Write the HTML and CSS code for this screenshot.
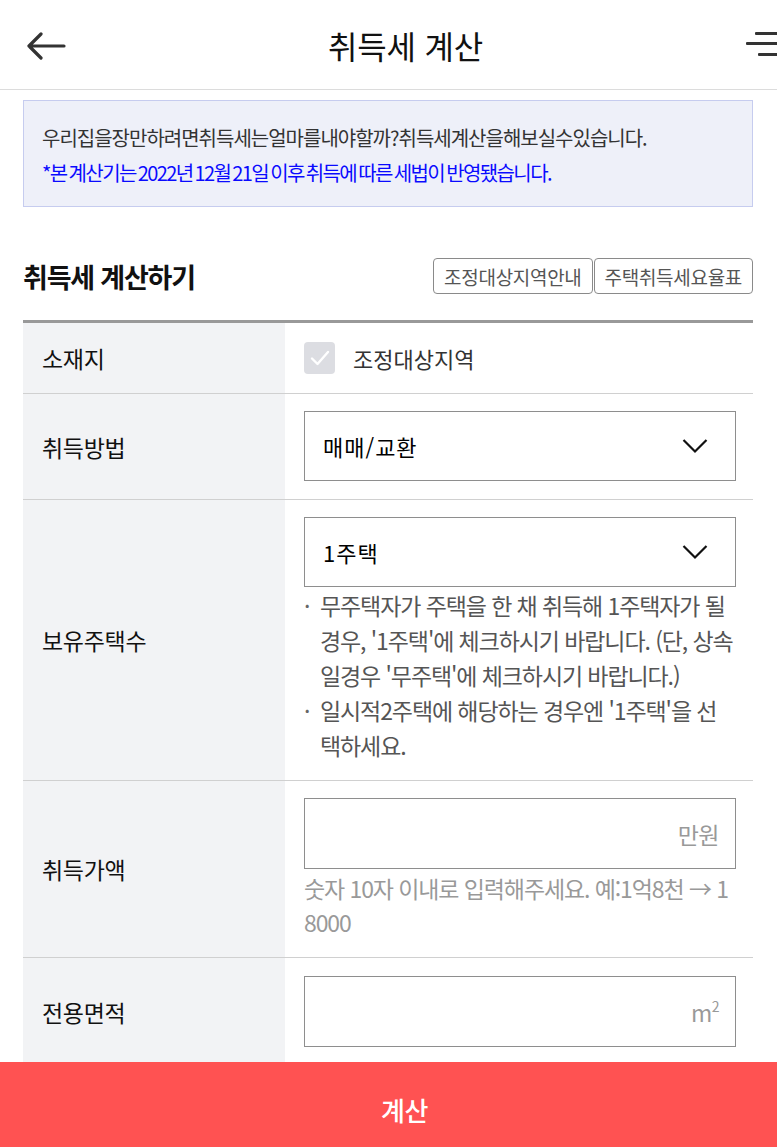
FILE: index.html
```html
<!DOCTYPE html>
<html lang="ko">
<head>
<meta charset="utf-8">
<title>취득세 계산</title>
<link rel="stylesheet" href="styles.css">
</head>
<body>
<header class="topbar">
  <button class="icon-btn back" aria-label="뒤로">
    <svg width="40" height="28" viewBox="0 0 40 28"><path d="M3 14H38M15 2L3 14L15 26" fill="none" stroke="#333" stroke-width="3.2" stroke-linecap="round" stroke-linejoin="round"/></svg>
  </button>
  <h1 class="title">취득세 계산</h1>
  <button class="icon-btn menu" aria-label="메뉴">
    <span class="bar bar1"></span>
    <span class="bar bar2"></span>
    <span class="bar bar3"></span>
  </button>
</header>

<main class="content">
  <div class="notice">
    <p class="notice-main">우리집을장만하려면취득세는얼마를내야할까?취득세계산을해보실수있습니다.</p>
    <p class="notice-blue">*본 계산기는 2022년 12월 21일 이후 취득에 따른 세법이 반영됐습니다.</p>
  </div>

  <div class="section-head">
    <h2 class="section-title">취득세 계산하기</h2>
    <div class="head-btns">
      <button class="outline-btn">조정대상지역안내</button>
      <button class="outline-btn">주택취득세요율표</button>
    </div>
  </div>

  <div class="form-table">
    <div class="row">
      <div class="label">소재지</div>
      <div class="value value-center">
        <label class="check">
          <span class="check-box">
            <svg width="20" height="16" viewBox="0 0 20 16"><path d="M2 8.5L7.5 14L18 2" fill="none" stroke="#fff" stroke-width="2.4" stroke-linecap="round" stroke-linejoin="round"/></svg>
          </span>
          <span class="check-text">조정대상지역</span>
        </label>
      </div>
    </div>

    <div class="row">
      <div class="label">취득방법</div>
      <div class="value">
        <div class="select-wrap">
          <select class="select"><option>매매/교환</option></select>
          <svg class="chevron" width="26" height="16" viewBox="0 0 26 16"><path d="M1.5 2L13 13.5L24.5 2" fill="none" stroke="#111" stroke-width="2.2"/></svg>
        </div>
      </div>
    </div>

    <div class="row">
      <div class="label">보유주택수</div>
      <div class="value value-notes">
        <div class="select-wrap">
          <select class="select"><option>1주택</option></select>
          <svg class="chevron" width="26" height="16" viewBox="0 0 26 16"><path d="M1.5 2L13 13.5L24.5 2" fill="none" stroke="#111" stroke-width="2.2"/></svg>
        </div>
        <ul class="notes">
          <li>무주택자가 주택을 한 채 취득해 1주택자가 될 경우, '1주택'에 체크하시기 바랍니다. (단, 상속일경우 '무주택'에 체크하시기 바랍니다.)</li>
          <li>일시적2주택에 해당하는 경우엔 '1주택'을 선택하세요.</li>
        </ul>
      </div>
    </div>

    <div class="row">
      <div class="label">취득가액</div>
      <div class="value">
        <div class="field">
          <input class="field-input" type="text" aria-label="취득가액">
          <span class="unit">만원</span>
        </div>
        <p class="help">숫자 10자 이내로 입력해주세요. 예:1억8천 → 18000</p>
      </div>
    </div>

    <div class="row">
      <div class="label">전용면적</div>
      <div class="value value-last">
        <div class="field">
          <input class="field-input" type="text" aria-label="전용면적">
          <span class="unit">m<sup class="sup">2</sup></span>
        </div>
      </div>
    </div>
  </div>
</main>

<footer class="bottom-bar">
  <button class="calc-btn">계산</button>
</footer>
</body>
</html>
```

FILE: styles.css
```css
html, body {
  margin: 0;
  padding: 0;
  overflow-x: hidden;
  background: #fff;
}
body {
  font-family: "Noto Sans CJK KR", "Noto Sans", sans-serif;
  color: #111;
  width: 777px;
}
button {
  font-family: inherit;
}

/* header */
.topbar {
  width: 809px;
  height: 89px;
  border-bottom: 1px solid #dcdcdc;
  display: flex;
  align-items: center;
  justify-content: space-between;
  box-sizing: content-box;
}
.icon-btn {
  background: none;
  border: 0;
  padding: 0;
  cursor: pointer;
}
.back {
  margin-left: 26px;
  margin-top: 2px;
  display: flex;
}
.title {
  margin: 0;
  font-size: 32px;
  font-weight: 400;
  letter-spacing: -0.2px;
  color: #111;
}
.menu {
  width: 41px;
  margin-right: 23px;
  display: flex;
  flex-direction: column;
  align-items: flex-end;
  gap: 7.5px;
  margin-top: -2px;
}
.bar {
  display: block;
  height: 3px;
  background: #333;
  border-radius: 1px;
}
.bar1 { width: 31px; }
.bar2 { width: 40px; }
.bar3 { width: 28px; }

/* content */
.content {
  padding: 10px 24px 120px 23px;
}
.notice {
  background: #eef0f9;
  border: 1px solid #c6ccef;
  padding: 19px 18px 16px;
}
.notice p {
  margin: 0;
  font-size: 20px;
  line-height: 35px;
  letter-spacing: -1px;
}
.notice .notice-main {
  color: #333;
}
.notice .notice-blue {
  color: #0a0aff;
  letter-spacing: -1.6px;
  word-spacing: -2px;
}

.section-head {
  margin-top: 51px;
  display: flex;
  align-items: center;
  justify-content: space-between;
  height: 36px;
}
.section-title {
  margin: 0;
  font-size: 27px;
  font-weight: 700;
  letter-spacing: -1.2px;
  color: #111;
}
.head-btns {
  display: flex;
  gap: 1px;
}
.outline-btn {
  height: 36px;
  padding: 0 10px;
  background: #fff;
  border: 1px solid #8a8a8a;
  border-radius: 4px;
  font-size: 19px;
  letter-spacing: -0.3px;
  color: #555;
}

/* table */
.form-table {
  margin-top: 26px;
  border-top: 3px solid #999;
}
.row {
  display: grid;
  grid-template-columns: 262px 1fr;
  border-bottom: 1px solid #d0d0d0;
}
.label {
  background: #f2f3f5;
  display: flex;
  align-items: center;
  padding-left: 19px;
  font-size: 23px;
  letter-spacing: -0.3px;
  color: #111;
}
.value {
  padding: 17px 17px 18px 19px;
}
.value-notes {
  padding-bottom: 17px;
}
.value-last {
  padding-top: 18px;
}
.value-center {
  padding-top: 0;
  padding-bottom: 0;
  height: 70px;
  display: flex;
  align-items: center;
}
.check {
  display: flex;
  align-items: center;
  gap: 18px;
}
.check-box {
  width: 31px;
  height: 32px;
  border-radius: 4px;
  background: #dcdde2;
  display: flex;
  align-items: center;
  justify-content: center;
}
.check-text {
  font-size: 22px;
  color: #333;
  letter-spacing: 0;
}

.select-wrap {
  position: relative;
}
.select {
  display: block;
  width: 100%;
  height: 70px;
  box-sizing: border-box;
  border: 1px solid #8e8e8e;
  background: #fff;
  appearance: none;
  -webkit-appearance: none;
  padding: 0 60px 0 18px;
  font-family: "Noto Sans CJK KR", sans-serif;
  font-size: 22px;
  letter-spacing: 1px;
  color: #000;
  border-radius: 0;
}
.chevron {
  position: absolute;
  right: 28px;
  top: 27px;
  pointer-events: none;
}

.notes {
  list-style: none;
  margin: 1px 0 0;
  padding: 0;
  font-size: 23px;
  line-height: 35px;
  letter-spacing: -1.1px;
  color: #555;
}
.notes li {
  display: flex;
}
.notes li::before {
  content: "·";
  flex: 0 0 16px;
  color: #666;
}

.field {
  display: flex;
  align-items: center;
  height: 71px;
  box-sizing: border-box;
  border: 1px solid #8e8e8e;
  padding: 0 16px 0 18px;
}
.field-input {
  flex: 1;
  min-width: 0;
  border: 0;
  outline: 0;
  height: 100%;
  font-size: 21px;
  font-family: inherit;
  background: transparent;
}
.unit {
  font-size: 23px;
  color: #999;
  letter-spacing: -0.5px;
}
.sup {
  font-size: 14px;
  vertical-align: 10px;
  line-height: 0;
}
.help {
  margin: 2px 0 0;
  font-size: 23px;
  line-height: 34px;
  letter-spacing: -1.1px;
  color: #999;
  word-break: break-all;
}

/* bottom */
.bottom-bar {
  position: fixed;
  left: 0;
  bottom: 0;
  width: 809px;
  height: 85px;
  background: #ff5252;
  display: flex;
}
.calc-btn {
  flex: 1;
  background: none;
  border: 0;
  padding: 10px 0 0;
  color: #fff;
  font-size: 26px;
  font-weight: 500;
  letter-spacing: -0.5px;
}
```
